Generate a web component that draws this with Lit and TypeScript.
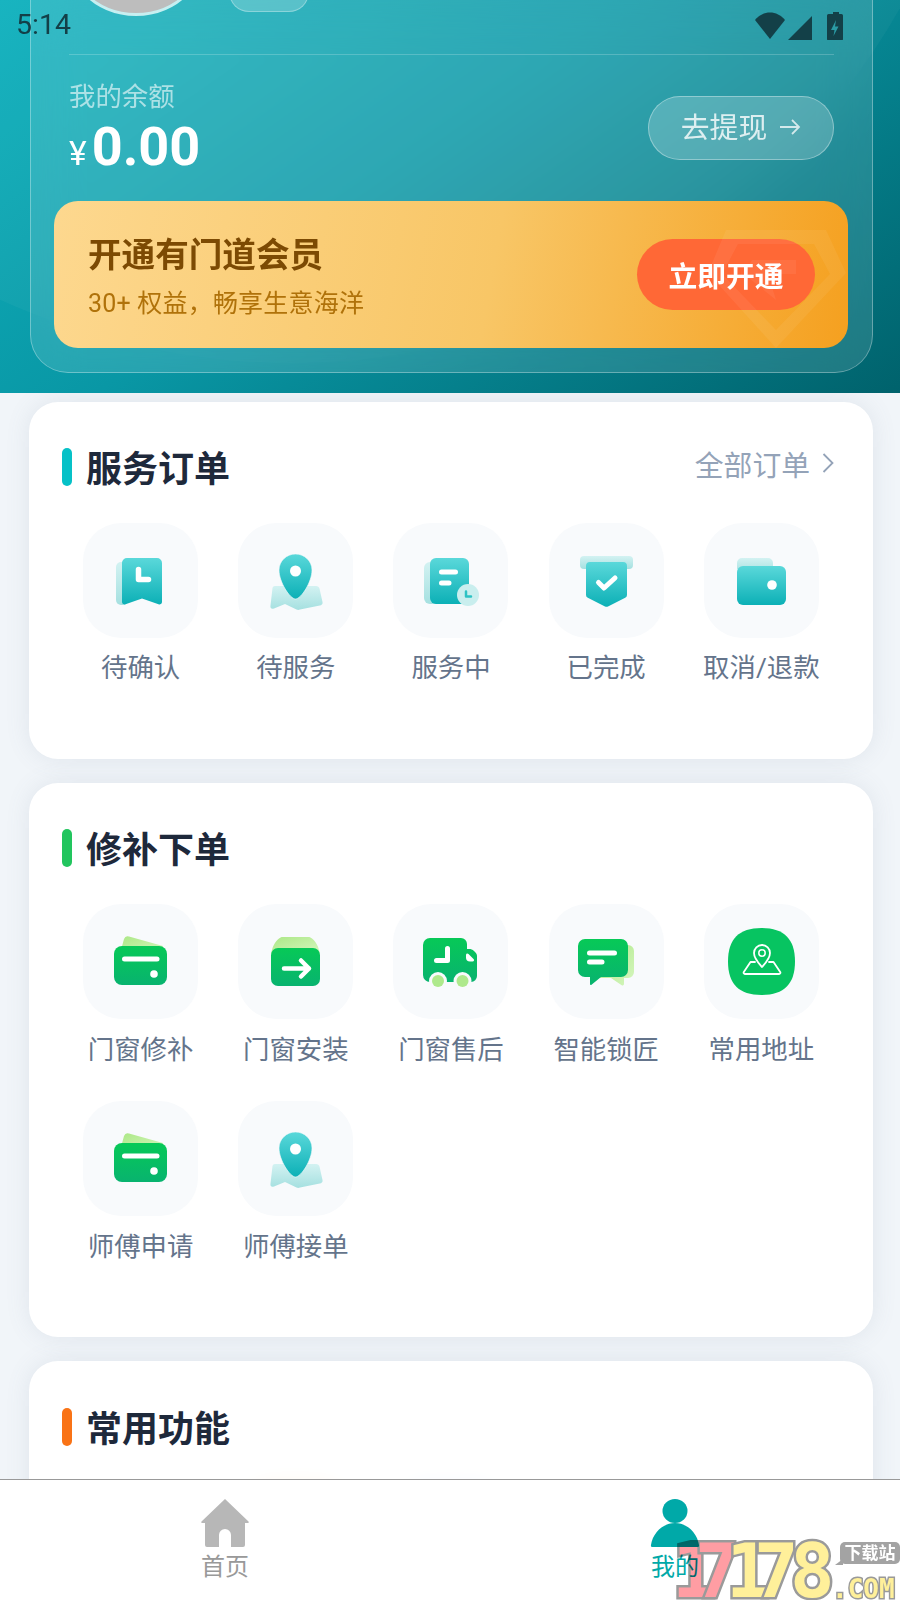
import { LitElement, html, css, svg } from "lit";
import { customElement } from "lit/decorators.js";

const defs = svg`<defs>
<linearGradient id="t" x1="0" y1="0" x2="0" y2="1"><stop offset="0" stop-color="#5ad8da"/><stop offset="1" stop-color="#0cb0b6"/></linearGradient>
<linearGradient id="tp" x1="0" y1="0" x2="0" y2="1"><stop offset="0" stop-color="#d3f2f2"/><stop offset="1" stop-color="#a5e0e0"/></linearGradient>
<linearGradient id="g" x1="0" y1="0" x2="0" y2="1"><stop offset="0" stop-color="#07c957"/><stop offset="1" stop-color="#08b36f"/></linearGradient>
<linearGradient id="gp" x1="0" y1="0" x2="1" y2="1"><stop offset="0" stop-color="#ace886"/><stop offset="1" stop-color="#d6f6bf"/></linearGradient>
</defs>`;

const icons: Record<string, unknown> = {
  bookmark: svg`<rect x="33" y="39" width="12" height="43" rx="5" fill="url(#tp)"/>
    <path d="M44 35h30a5 5 0 0 1 5 5v39a2.500 2.500 0 0 1-3.500 2.300L59 75.500 42.500 81.300A2.500 2.500 0 0 1 39 79V40a5 5 0 0 1 5-5z" fill="url(#t)"/>
    <path d="M55.500 46.500V56.500H65.500" fill="none" stroke="#fff" stroke-width="5.500" stroke-linecap="round" stroke-linejoin="round"/>`,
  pin: svg`<path d="M37 63h13l8 10 8-10 12 0c2 0 3 1 3.500 2.500l3 13.500c.3 1.500-.2 2.500-1.500 3.200L62 86.500a4 4 0 0 1-3.500 0L47 81l-11 4.500c-2.500 1-4-.5-3.500-3L34.500 65c.3-1.200 1.200-2 2.500-2z" fill="url(#tp)"/>
    <path d="M57.500 31C66.500 31 74 38 74 47c0 12-11 29-16.500 29S41 59 41 47c0-9 7.500-16 16.500-16z" fill="url(#t)" stroke="#f8fafc" stroke-width=".6"/>
    <circle cx="57.500" cy="48" r="5.500" fill="#fff"/>`,
  doc: svg`<rect x="31" y="39" width="30" height="42" rx="6" fill="url(#tp)"/>
    <rect x="37" y="35" width="39" height="46" rx="6" fill="url(#t)"/>
    <path d="M48.500 49H62.500M48.500 60H56" stroke="#fff" stroke-width="5" stroke-linecap="round"/>
    <circle cx="75" cy="72" r="11" fill="#c9eeee"/>
    <path d="M73 68.500V73.500H78" fill="none" stroke="#2cc2c4" stroke-width="2.500" stroke-linecap="round" stroke-linejoin="round"/>`,
  shield: svg`<rect x="31" y="33" width="53" height="13" rx="4" fill="url(#tp)"/>
    <path d="M41 39h33a4 4 0 0 1 4 4v29a3 3 0 0 1-1.800 2.700L59 83.500a4 4 0 0 1-3 0L38.800 74.700A3 3 0 0 1 37 72V43a4 4 0 0 1 4-4z" fill="url(#t)"/>
    <path d="M49.500 59.500L55 65 66 55" fill="none" stroke="#fff" stroke-width="5" stroke-linecap="round" stroke-linejoin="round"/>`,
  wallet: svg`<path d="M33 50V40a5 5 0 0 1 5-5h26a5 5 0 0 1 5 5v6H33z" fill="url(#tp)"/>
    <rect x="33" y="43" width="49" height="39" rx="6" fill="url(#t)"/>
    <circle cx="68" cy="62" r="4.800" fill="#fff"/>`,
  gwallet: svg`<path d="M38 46l3-11a4 4 0 0 1 5-2.500L80 42l-2 8z" fill="url(#gp)"/>
    <rect x="31" y="42" width="53" height="39" rx="8" fill="url(#g)"/>
    <path d="M41.500 55H74" stroke="#fff" stroke-width="5" stroke-linecap="round"/>
    <circle cx="71" cy="70" r="3.800" fill="#fff"/>`,
  gbox: svg`<path d="M33 50c1-6 4-13 8-15.500 1-.8 2-1.500 4-1.500h25c2 0 3 .7 4 1.500 4 2.500 7 9.500 8 15.500z" fill="url(#gp)"/>
    <rect x="33" y="44" width="49" height="38" rx="7" fill="url(#g)"/>
    <path d="M46 64.500H71M63 56.500L71 64.500 63 72.500" fill="none" stroke="#fff" stroke-width="4.500" stroke-linecap="round" stroke-linejoin="round"/>`,
  truck: svg`<path d="M37 34h31a6 6 0 0 1 6 6v5h2c2 0 3.500.6 5 2l1.500 1.500c.8.8 1.500 2 1.500 3.500V72a6 6 0 0 1-6 6H37a7 7 0 0 1-7-7V41a7 7 0 0 1 7-7z" fill="url(#g)"/>
    <path d="M43.500 56.500H54.500V44.500" fill="none" stroke="#fff" stroke-width="5" stroke-linecap="round" stroke-linejoin="round"/>
    <path d="M73 51c0-1.500 1.500-2 2.500-1l5 5c1 1 .5 2.500-1 2.500H77a4 4 0 0 1-4-4z" fill="#fff"/>
    <circle cx="45" cy="77" r="9" fill="#f8fafc"/><circle cx="45" cy="77" r="6" fill="#aee98c"/>
    <circle cx="69.500" cy="77" r="9" fill="#f8fafc"/><circle cx="69.500" cy="77" r="6" fill="#aee98c"/>`,
  chat: svg`<path d="M72 41h7a6 6 0 0 1 6 6v21a6 6 0 0 1-6 6h-4v6a1.500 1.500 0 0 1-2.300 1.200L62 74H50z" fill="url(#gp)"/>
    <path d="M36 35h36a7 7 0 0 1 7 7v24a7 7 0 0 1-7 7H52l-9.500 7.800a1 1 0 0 1-1.500-.8V73h-5a7 7 0 0 1-7-7V42a7 7 0 0 1 7-7z" fill="url(#g)"/>
    <path d="M40.500 49H65.500M40.500 58H53" stroke="#fff" stroke-width="5" stroke-linecap="round"/>`,
  addr: svg`<path d="M57.500 24C80 24 91 35 91 57.500S80 91 57.500 91 24 80 24 57.500 35 24 57.500 24z" fill="#07c461"/>
    <path d="M58 63c-3.500-4-8-8.500-8-14a8 8 0 0 1 16 0c0 5.500-4.500 10-8 14z" fill="none" stroke="#fff" stroke-width="1.800" stroke-linejoin="round"/>
    <circle cx="58" cy="49" r="3.200" fill="none" stroke="#fff" stroke-width="1.500"/>
    <path d="M51 58H46.500L39.800 68a1.300 1.300 0 0 0 1.200 2H75a1.300 1.300 0 0 0 1.200-2L69.500 58H65" fill="none" stroke="#fff" stroke-width="1.800" stroke-linecap="round" stroke-linejoin="round"/>`,
};

const orderItems = [
  ["bookmark", "待确认"], ["pin", "待服务"], ["doc", "服务中"], ["shield", "已完成"], ["wallet", "取消/退款"],
];
const repairItems = [
  ["gwallet", "门窗修补"], ["gbox", "门窗安装"], ["truck", "门窗售后"], ["chat", "智能锁匠"], ["addr", "常用地址"],
  ["gwallet", "师傅申请"], ["pin", "师傅接单"],
];

@customElement("app-root")
export class AppRoot extends LitElement {
  static styles = css`
    :host {
      display: flex; flex-direction: column; width: 900px; height: 1600px; overflow: hidden;
      position: relative; background: #f1f5f9;
      font-family: Roboto, "Noto Sans CJK SC", sans-serif;
    }
    .main { flex: 1; min-height: 0; overflow: hidden; display: flex; flex-direction: column; }
    .hero {
      flex: none; height: 393px; position: relative; overflow: hidden;
      display: flex; flex-direction: column; justify-content: flex-end; align-items: flex-start;
      background: linear-gradient(145deg, #10b2be 0%, #0997a5 45%, #00626c 100%);
    }
    .hero::before {
      content: ""; position: absolute; left: -409px; top: -1037px; width: 1400px; height: 1400px;
      border-radius: 50%; background: rgba(255,255,255,.035);
    }
    .panel {
      flex: none; width: 843px; box-sizing: border-box; margin: 0 0 20px 30px; padding: 0 24px 24px 23px;
      position: relative; border: 1px solid rgba(255,255,255,.32); border-radius: 38px;
      background: linear-gradient(135deg, rgba(255,255,255,.12), rgba(255,255,255,.12));
      backdrop-filter: blur(24px);
    }
    .profile { height: 53px; margin: 0 14px 0 15px; display: flex; align-items: flex-end; gap: 18px; padding-bottom: 38px; }
    .avatar {
      flex: none; width: 150px; height: 150px; box-sizing: border-box; border-radius: 50%; margin-left: -8px;
      background: #bdbdbd; border: 3px solid #c6eff1;
    }
    .tag {
      flex: none; width: 80px; height: 40px; box-sizing: border-box; border-radius: 0 0 20px 20px; margin-bottom: 4px;
      background: rgba(255,255,255,.2); border: 1px solid rgba(255,255,255,.3);
    }
    .balance {
      margin: 0 14px 0 15px; padding-top: 24px; height: 147px; box-sizing: border-box;
      border-top: 1px solid rgba(255,255,255,.2); display: flex; justify-content: space-between; align-items: flex-start;
    }
    .bal-label { font-size: 26.400px; line-height: 36px; color: rgba(255,255,255,.6); }
    .bal-amount { display: flex; align-items: baseline; color: #fff; line-height: 66px; margin-top: -1px; }
    .cur { font-size: 33.600px; margin-right: 5px; }
    .num { font-size: 54px; font-weight: 700; }
    .withdraw {
      flex: none; width: 186px; height: 64px; box-sizing: border-box; margin-top: 17px; border-radius: 32px;
      padding-bottom: 5px;
      background: rgba(255,255,255,.2); border: 1px solid rgba(255,255,255,.35);
      display: flex; align-items: center; justify-content: center; gap: 12px;
      color: rgba(255,255,255,.8); font-size: 28.800px;
    }
    .withdraw svg { margin-top: 3px; }
    .promo {
      height: 147px; position: relative; overflow: hidden; border-radius: 24px; box-sizing: border-box;
      padding: 4px 33px 0 34px; display: flex; align-items: center; justify-content: space-between;
      background: linear-gradient(100deg, #fdd88f 0%, #f8c666 55%, #f5a01f 100%);
    }
    .promo-title { font-size: 33.600px; line-height: 46px; font-weight: 700; color: #7c4a03; }
    .promo-sub { font-size: 25px; line-height: 34px; margin-top: 8px; color: #b0720a; letter-spacing: .2px; }
    .open {
      flex: none; width: 178px; height: 71px; border-radius: 36px; background: #ff6836; color: #fff; margin-top: -4px;
      font-size: 28.800px; font-weight: 700; display: flex; align-items: center; justify-content: center;
    }
    .gem { position: absolute; left: 654px; top: 27px; width: 140px; height: 120px; pointer-events: none; }
    .status {
      position: absolute; left: 0; top: 0; width: 900px; height: 48px; padding: 6px 56px 0 16px; box-sizing: border-box;
      display: flex; justify-content: space-between; color: #134048; font-size: 28.500px; line-height: 38px;
    }
    .status svg { display: block; width: 90px; height: 30px; margin-top: 4px; }
    .content { padding: 9px 27px 0 29px; display: flex; flex-direction: column; gap: 24px; }
    .card {
      flex: none; background: #fff; border-radius: 29px; padding: 46px 33px 0 34px; box-sizing: border-box;
      box-shadow: 0 0 24px rgba(100,116,139,.12);
    }
    .c1 { height: 357px; }
    .c2 { height: 554px; }
    .c3 { height: 240px; padding-top: 47px; }
    .head { height: 38px; display: flex; align-items: center; margin-left: -1px; margin-right: 6px; }
    .bar { flex: none; width: 10px; height: 38px; border-radius: 5px; margin-right: 14px; }
    .title { flex: 1; font-size: 36px; font-weight: 700; color: #1e293b; line-height: 38px; padding-top: 6px; }
    .all { font-size: 28.800px; color: #94a3b8; display: flex; align-items: center; gap: 12px; margin-top: -8px; }
    .grid { display: grid; grid-template-columns: repeat(5, 155.200px); margin-top: 37px; row-gap: 0; }
    .item { display: flex; flex-direction: column; align-items: center; height: 197px; }
    .tile { width: 115px; height: 115px; border-radius: 38px; background: #f8fafc; flex: none; }
    .tile svg { display: block; width: 115px; height: 115px; }
    .label { font-size: 26.400px; line-height: 36px; margin-top: 12px; color: #64748b; white-space: nowrap; }
    .c2 .label { margin-top: 13px; }
    .glow1 { background: #fff7ed; box-shadow: 0 0 16px 4px #fffaf4; }
    .glow2 { background: #f2f7ff; box-shadow: 0 0 16px 4px #f8fbff; }
    .none { background: #fff; }
    .tabs {
      flex: none; height: 121px; box-sizing: border-box; border-top: 1px solid #999; background: #fff;
      display: grid; grid-template-columns: 1fr 1fr; position: relative; z-index: 1;
    }
    .tab { display: flex; flex-direction: column; align-items: center; padding-top: 19px; font-size: 24px; line-height: 34px; color: #999; }
    .tab svg { display: block; width: 50px; height: 48px; margin-bottom: 3px; }
    .tab.on { color: #00a9a8; }
    .mark { position: absolute; left: 672px; top: 1534px; width: 228px; height: 66px; z-index: 2; mix-blend-mode: multiply; }
    .d {
      position: absolute; top: 8px; font: 700 74px/58px "DejaVu Sans Mono", monospace;
      -webkit-text-stroke: 5px #9a9a9a; paint-order: stroke fill;
    }
    .pink { color: #ff9da3; }
    .yel { color: #fff09a; }
    .bubble {
      position: absolute; left: 168px; top: 8px; width: 60px; height: 22px; background: #a3a3a3; border-radius: 5px;
      color: #fff; font-size: 17px; font-weight: 700; line-height: 22px; text-align: center;
    }
    .bubble::after {
      content: ""; position: absolute; left: -5px; bottom: -1px; border-style: solid; border-width: 6px 0 0 8px;
      border-color: transparent transparent transparent #a3a3a3; transform: scaleX(-1);
    }
    .com {
      position: absolute; left: 160px; top: 44px; font: 700 26px/22px "DejaVu Sans Mono", monospace;
      color: #fff09a; -webkit-text-stroke: 3px #9a9a9a; paint-order: stroke fill;
    }
  `;

  private item(i: string[]) {
    return html`<div class="item">
      <div class="tile"><svg viewBox="0 0 115 115">${defs}${icons[i[0]]}</svg></div>
      <div class="label">${i[1]}</div>
    </div>`;
  }

  render() {
    return html`
      <div class="main">
        <div class="hero">
          <div class="panel">
            <div class="profile"><div class="avatar"></div><div class="tag"></div></div>
            <div class="balance">
              <div>
                <div class="bal-label">我的余额</div>
                <div class="bal-amount"><span class="cur">¥</span><span class="num">0.00</span></div>
              </div>
              <div class="withdraw">去提现
                <svg width="22" height="20" viewBox="0 0 22 20"><path d="M1 10H20M13 3L20 10 13 17" fill="none" stroke="rgba(255,255,255,.75)" stroke-width="1.800"/></svg>
              </div>
            </div>
            <div class="promo">
              <div>
                <div class="promo-title">开通有门道会员</div>
                <div class="promo-sub">30+ 权益，畅享生意海洋</div>
              </div>
              <div class="open">立即开通</div>
              <svg class="gem" viewBox="0 0 140 120"><path fill-rule="evenodd" fill="rgba(255,255,255,.06)" d="M18 2H118L138 45 68 120 0 45zM30 16L14 46 68 102 122 46 106 16zM44 32H88V46H60L68 72 36 46z"/></svg>
            </div>
          </div>
        </div>
        <div class="content">
          <div class="card c1">
            <div class="head"><div class="bar" style="background:#06c1c7"></div><div class="title">服务订单</div>
              <div class="all">全部订单<svg width="12" height="22" viewBox="0 0 12 22"><path d="M1.500 2L10.500 11 1.500 20" fill="none" stroke="#94a3b8" stroke-width="1.800"/></svg></div>
            </div>
            <div class="grid">${orderItems.map((i) => this.item(i))}</div>
          </div>
          <div class="card c2">
            <div class="head"><div class="bar" style="background:#22c55e"></div><div class="title">修补下单</div></div>
            <div class="grid">${repairItems.map((i) => this.item(i))}</div>
          </div>
          <div class="card c3">
            <div class="head"><div class="bar" style="background:#f97316"></div><div class="title">常用功能</div></div>
            <div class="grid">
              <div class="item"><div class="tile none"></div></div>
              <div class="item"><div class="tile glow1"></div></div>
              <div class="item"><div class="tile glow2"></div></div>
            </div>
          </div>
        </div>
      </div>
      <div class="tabs">
        <div class="tab">
          <svg viewBox="0 0 50 48"><path d="M25 0L48.500 22.500a1 1 0 0 1-.5 1.500H45V46a2 2 0 0 1-2 2H31V36a6 6 0 0 0-12 0V48H7a2 2 0 0 1-2-2V24H2a1 1 0 0 1-.5-1.500z" fill="#b7b7b7"/></svg>
          首页
        </div>
        <div class="tab on">
          <svg viewBox="0 0 50 48"><ellipse cx="25" cy="12" rx="12.500" ry="12" fill="#00a9a8"/><path d="M25 24c-13 0-22.500 11-24 22a1.500 1.500 0 0 0 1.500 2h45a1.500 1.500 0 0 0 1.500-2C47.500 35 38 24 25 24z" fill="#00a9a8"/></svg>
          我的
        </div>
      </div>
      <div class="status">
        <span>5:14</span>
        <svg viewBox="0 0 90 30">
          <path d="M1 10C9 0 23 0 31 10L16 29z" fill="#134048"/>
          <path d="M34 30L58 6V30z" fill="#134048"/>
          <path d="M79 2h6v2h2.500a1.500 1.500 0 0 1 1.500 1.500V29a1.500 1.500 0 0 1-1.500 1.500h-13A1.500 1.500 0 0 1 73 29V5.500A1.500 1.500 0 0 1 74.500 4H79V2z" fill="#134048"/>
          <path d="M82 10l-5 10h3.500l-1 6 5-9.500H81z" fill="#2a9aa4"/>
        </svg>
      </div>
      <div class="mark">
        <span class="d pink" style="left:0">1</span>
        <span class="d pink" style="left:23px">7</span>
        <span class="d yel" style="left:54px">1</span>
        <span class="d yel" style="left:82px">7</span>
        <span class="d yel" style="left:118px">8</span>
        <div class="bubble">下载站</div>
        <div class="com">.COM</div>
      </div>
    `;
  }
}
